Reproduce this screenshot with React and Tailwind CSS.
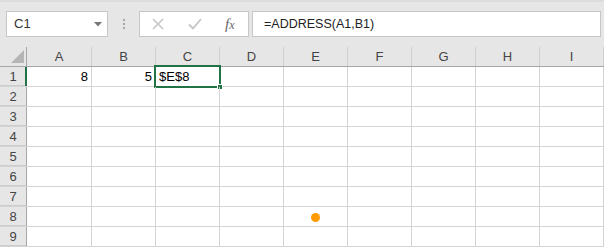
import React from 'react';

const cols = ['A', 'B', 'C', 'D', 'E', 'F', 'G', 'H', 'I'];
const rows = [1, 2, 3, 4, 5, 6, 7, 8, 9];
const colWidth = ['w-[65px]', 'w-[64px]', 'w-[64px]', 'w-[64px]', 'w-[64px]', 'w-[64px]', 'w-[64px]', 'w-[64px]', 'w-[64px]'];

const values = { A1: '8', B1: '5', C1: '$E$8' };

const FormulaBar = () => (
  <div className="h-[47px] bg-[#e6e6e6] flex flex-col">
    <div className="h-[2px] bg-[#dcdcdc]" />
    <div className="flex items-start pt-[9px] pl-[6px]">
      {/* name box */}
      <div className="w-[102px] h-[26px] bg-white border border-[#c6c6c6] flex items-center justify-between pl-[7px] pr-[5px]">
        <span className="text-[13px] text-[#333]">C1</span>
        <svg width="8" height="5" viewBox="0 0 8 5"><path d="M0 0 L8 0 L4 4.5 Z" fill="#777" /></svg>
      </div>
      {/* drag dots */}
      <div className="w-[31px] h-[26px] flex flex-col items-center justify-center gap-[2px]">
        <span className="w-[2px] h-[2px] bg-[#a6a6a6]" />
        <span className="w-[2px] h-[2px] bg-[#a6a6a6]" />
        <span className="w-[2px] h-[2px] bg-[#a6a6a6]" />
      </div>
      {/* cancel / enter / fx */}
      <div className="w-[110px] h-[26px] bg-white border border-[#c6c6c6] flex items-center pl-[12px]">
        <svg width="12" height="12" viewBox="0 0 12 12">
          <path d="M1 1 L11 11 M11 1 L1 11" stroke="#c4c4c4" strokeWidth="1.5" />
        </svg>
        <svg className="ml-[24px]" width="14" height="12" viewBox="0 0 14 12">
          <path d="M1 6.5 L5 10.5 L13 1" stroke="#c4c4c4" strokeWidth="1.8" fill="none" />
        </svg>
        <span className="ml-[23px] text-[15px] italic text-[#666] leading-none" style={{ fontFamily: '"Liberation Serif", serif' }}>
          f<span className="text-[12px]">x</span>
        </span>
      </div>
      {/* formula input */}
      <div className="ml-[3px] w-[349px] h-[26px] bg-white border border-[#c6c6c6] flex items-center pl-[11px]">
        <span className="text-[12.5px] text-[#222]">=ADDRESS(A1,B1)</span>
      </div>
    </div>
  </div>
);

const HeaderRow = () => (
  <div className="flex h-[20px] bg-[#e6e6e6] border-b border-[#a6a6a6]">
    <div className="w-[27px] border-r border-[#a6a6a6] relative">
      <svg className="absolute left-[11px] top-[3px]" width="13" height="13" viewBox="0 0 13 13">
        <path d="M0 13 L13 13 L13 0 Z" fill="#b5b5b5" />
      </svg>
    </div>
    {cols.map((c, i) => (
      <div
        key={c}
        className={`${colWidth[i]} border-r border-[#cfcfcf] flex items-center justify-center text-[13px] text-[#444] relative`}
      >
        {c}
        {c === 'C' && <div className="absolute left-0 right-0 bottom-[-1px] h-[2px] bg-[#217346]" />}
      </div>
    ))}
  </div>
);

const Row = ({ n }) => (
  <div className="flex h-[20px] border-b border-[#d4d4d4]">
    <div className="w-[27px] bg-[#e6e6e6] border-r border-[#a6a6a6] flex items-center justify-center text-[13px] text-[#444] relative shadow-[inset_0_-1px_0_#cccccc]">
      {n}
      {n === 1 && <div className="absolute right-[-1px] top-0 bottom-0 w-[2px] bg-[#217346]" />}
    </div>
    {cols.map((c, i) => {
      const key = c + n;
      const v = values[key];
      const isNum = v && !v.startsWith('$');
      return (
        <div
          key={key}
          className={`${colWidth[i]} border-r border-[#d4d4d4] flex items-center text-[13px] text-black relative ${isNum ? 'justify-end pr-[3px]' : 'justify-start pl-[3px]'}`}
        >
          {v}
          {key === 'C1' && (
            <>
              <div className="absolute left-[-2px] top-[-2px] w-[67px] h-[23px] border-2 border-[#217346]" />
              <div className="absolute left-[61px] top-[17px] w-[6px] h-[6px] bg-[#217346] border border-white" />
            </>
          )}
          {key === 'E8' && <div className="absolute left-[27px] top-[6px] w-[9px] h-[9px] rounded-full bg-[#ff9a00]" />}
        </div>
      );
    })}
  </div>
);

export default function App() {
  return (
    <div className="w-[604px] h-[247px] bg-white overflow-hidden" style={{ fontFamily: '"Liberation Sans", Arial, sans-serif' }}>
      <FormulaBar />
      <HeaderRow />
      {rows.map((n) => (
        <Row key={n} n={n} />
      ))}
    </div>
  );
}
